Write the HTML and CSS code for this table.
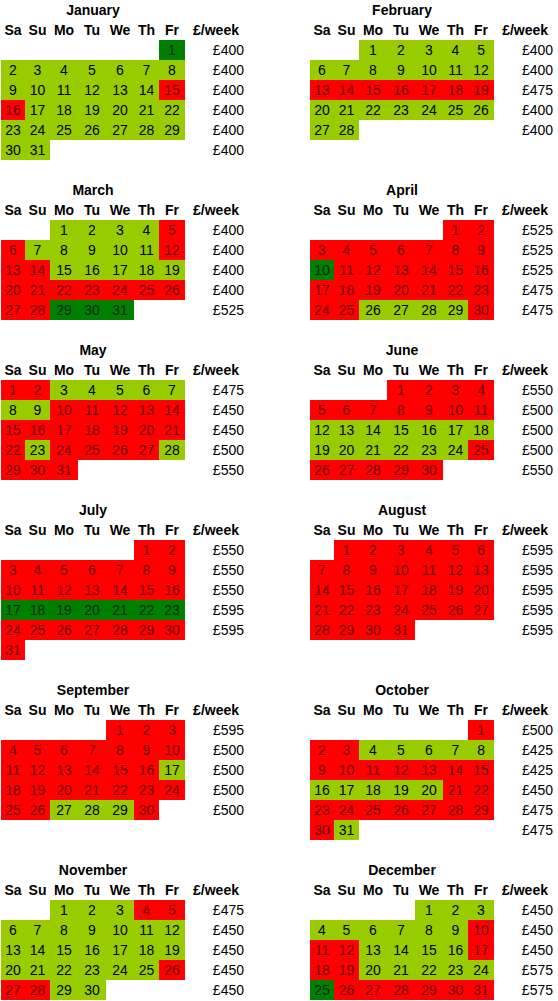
FILE: index.html
```html
<!DOCTYPE html>
<html lang="en">
<head>
    <meta charset="UTF-8">
    <meta name="viewport" content="width=device-width, initial-scale=1.0">
    <title>Prices</title>
    <link rel="stylesheet" href="styles.css">
</head>
<body>

<div class="year" id="year"></div>

<script>
// G = available, R = booked, D = special offer
// start: 0 = Saturday ... 6 = Friday
const months = [
    { name: 'January',   start: 6, colors: 'D GGGGGGG GGGGGGR RGGGGGG GGGGGGG GG',  prices: [400, 400, 400, 400, 400, 400] },
    { name: 'February',  start: 2, colors: 'GGGGG GGGGGGG RRRRRRR GGGGGGG GG',      prices: [400, 400, 475, 400, 400] },
    { name: 'March',     start: 2, colors: 'GGGGR RGGGGGR RRGGGGG RRRRRRR RRDDD',   prices: [400, 400, 400, 400, 525] },
    { name: 'April',     start: 5, colors: 'RR RRRRRRR DRRRRRR RRRRRRR RRGGGGR',    prices: [525, 525, 525, 475, 475] },
    { name: 'May',       start: 0, colors: 'RRGGGGG GGRRRRR RRRRRRR RGRRRRG RRR',   prices: [475, 450, 450, 500, 550] },
    { name: 'June',      start: 3, colors: 'RRRR RRRRRRR GGGGGGG GGGGGGR RRRRR',    prices: [550, 500, 500, 500, 550] },
    { name: 'July',      start: 5, colors: 'RR RRRRRRR RRRRRRR DDDDDDD RRRRRRR R',  prices: [550, 550, 550, 595, 595, null] },
    { name: 'August',    start: 1, colors: 'RRRRRR RRRRRRR RRRRRRR RRRRRRR RRRR',   prices: [595, 595, 595, 595, 595] },
    { name: 'September', start: 4, colors: 'RRR RRRRRRR RRRRRRG RRRRRRR RRGGGR',    prices: [595, 500, 500, 500, 500] },
    { name: 'October',   start: 6, colors: 'R RRGGGGG RRRRRRR GGGGGRR RRRRRRR RG',  prices: [500, 425, 425, 450, 475, 475] },
    { name: 'November',  start: 2, colors: 'GGGRR GGGGGGG GGGGGGG GGGGGGR RRGG',    prices: [475, 450, 450, 450, 450] },
    { name: 'December',  start: 4, colors: 'GGG GGGGGGR RRGGGGR RRGGGGG DRRRRRR',   prices: [450, 450, 450, 575, 575] }
];

const days = ['Sa', 'Su', 'Mo', 'Tu', 'We', 'Th', 'Fr'];
const cls = { G: 'free', R: 'booked', D: 'offer' };

function buildMonth(month) {
    let html = '<table class="month">';
    html += '<colgroup><col class="c-sa"><col class="c-su"><col class="c-mo"><col class="c-tu">'
          + '<col class="c-we"><col class="c-th"><col class="c-fr"><col class="c-price"></colgroup>';
    html += '<tr><th colspan="7" class="month-title">' + month.name + '</th><th></th></tr>';
    html += '<tr>' + days.map(d => '<th>' + d + '</th>').join('') + '<th>£/week</th></tr>';

    const weeks = month.colors.split(' ');
    let day = 1;
    weeks.forEach((week, i) => {
        html += '<tr>';
        const pad = i === 0 ? month.start : 0;
        for (let c = 0; c < 7; c++) {
            const k = c - pad;
            if (k >= 0 && k < week.length) {
                html += '<td class="day ' + cls[week[k]] + '">' + day + '</td>';
                day++;
            } else {
                html += '<td class="day"></td>';
            }
        }
        const p = month.prices[i];
        html += '<td class="price">' + (p ? '£' + p : '') + '</td>';
        html += '</tr>';
    });

    html += '</table>';
    return html;
}

document.getElementById('year').innerHTML = months.map(buildMonth).join('');
</script>

</body>
</html>
```

FILE: styles.css
```css
body {
    margin: 0;
    padding: 0 0 0 1px;
    background-color: #fff;
    font-family: "Liberation Sans", Arial, sans-serif;
    font-size: 14px;
    color: #000;
}

.year {
    display: grid;
    grid-template-columns: 309px 246px;
    row-gap: 20px;
    align-items: start;
}

.month {
    border-collapse: collapse;
    table-layout: fixed;
    width: 246px;
}

.c-sa { width: 24px; }
.c-su { width: 25px; }
.c-mo, .c-tu, .c-we { width: 28px; }
.c-th { width: 25px; }
.c-fr { width: 26px; }
.c-price { width: 62px; }

.month th,
.month td {
    height: 20px;
    padding: 0;
    line-height: 20px;
    text-align: center;
    white-space: nowrap;
}

.month th {
    font-weight: bold;
}

.month td.price {
    text-align: right;
    padding-right: 3px;
}

/* Colores de los días */
.free {
    background-color: #99cc00;
}

.booked {
    background-color: #ff0000;
    color: #6a0000;
}

.offer {
    background-color: #008000;
    color: #0b2a0b;
}
```
